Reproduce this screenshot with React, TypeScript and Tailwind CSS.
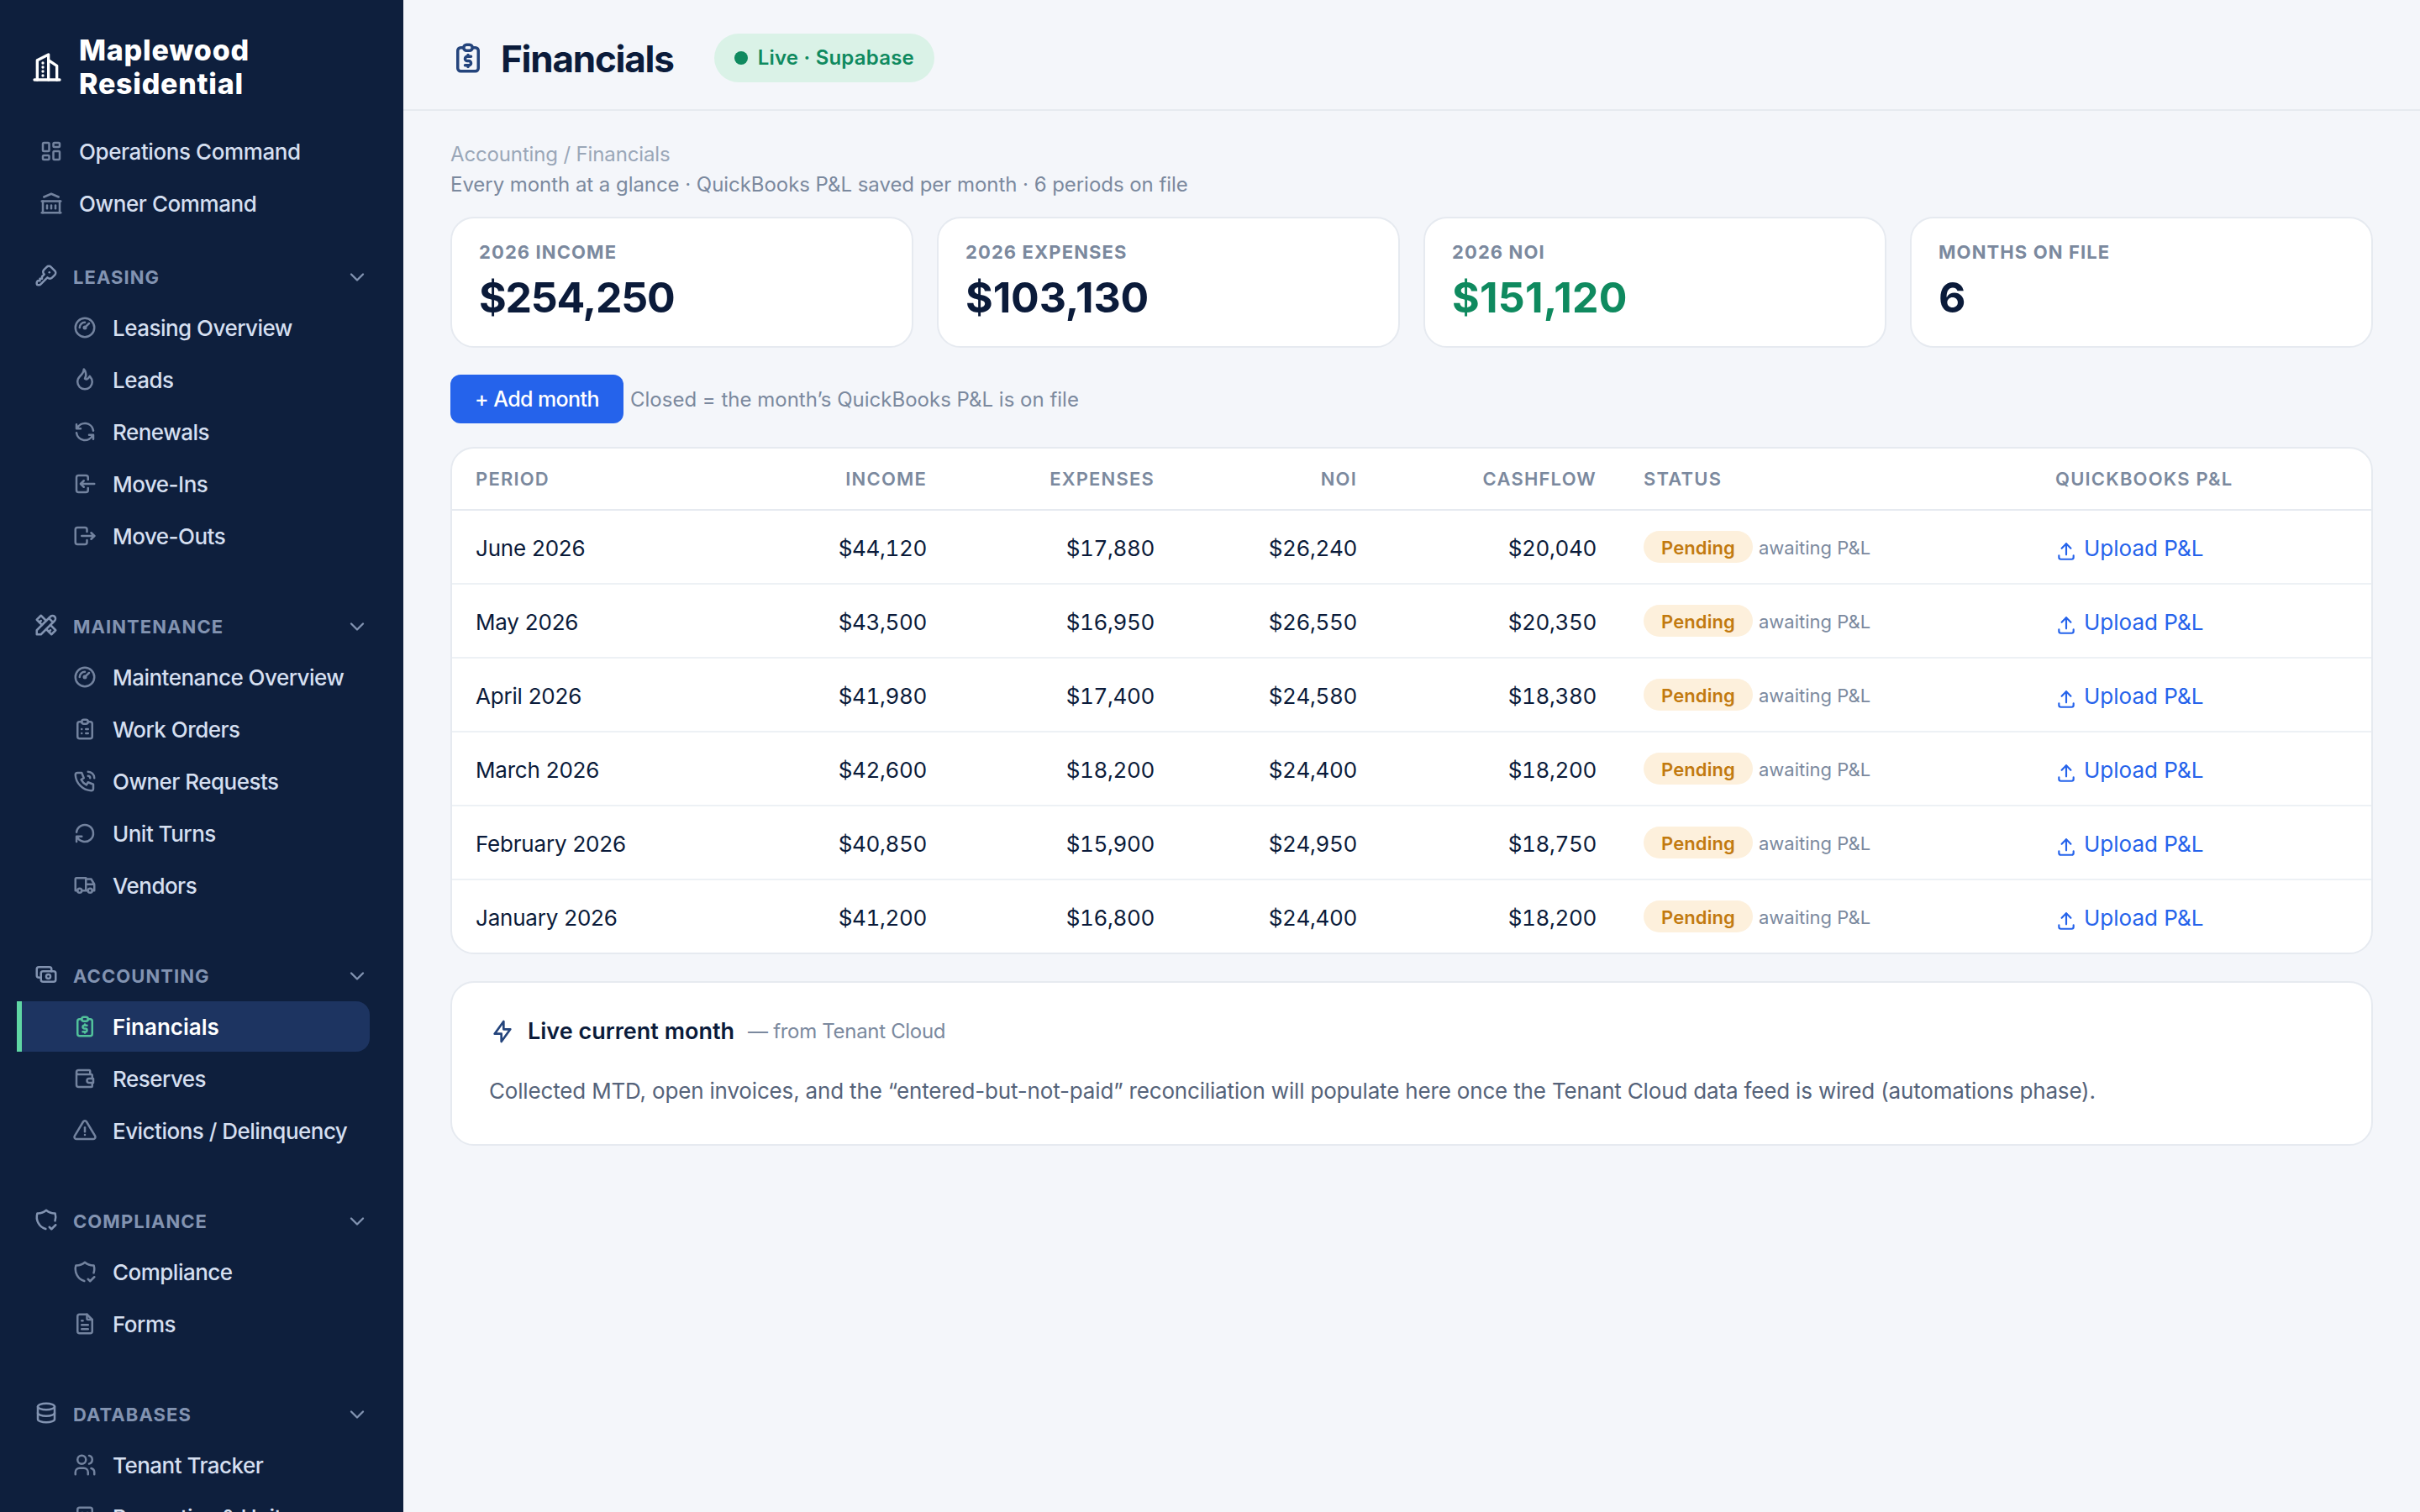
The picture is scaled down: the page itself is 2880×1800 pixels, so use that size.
import type { ComponentType } from "react";
import {
  TbAlertTriangle,
  TbBolt,
  TbBuilding,
  TbBuildingBank,
  TbBuildingSkyscraper,
  TbChevronDown,
  TbClipboardList,
  TbDatabase,
  TbFileText,
  TbFlame,
  TbGauge,
  TbKey,
  TbLayoutDashboard,
  TbLogin,
  TbLogout,
  TbPhoneCall,
  TbRefresh,
  TbReportMoney,
  TbRotateClockwise,
  TbShieldCheck,
  TbTools,
  TbTruck,
  TbUpload,
  TbUsers,
  TbWallet,
} from "react-icons/tb";

type Icon = ComponentType<{ className?: string }>;
type NavItem = { label: string; icon: Icon; active?: boolean };
type NavGroup = { label: string; icon: Icon; items: NavItem[] };

// Rounder banknotes than TbCash
function CashIcon({ className }: { className?: string }) {
  return (
    <svg
      viewBox="0 0 24 24"
      fill="none"
      stroke="currentColor"
      strokeWidth="2"
      strokeLinecap="round"
      strokeLinejoin="round"
      className={className}
    >
      <rect x="7" y="9" width="14" height="10" rx="2" />
      <circle cx="14" cy="14" r="2" />
      <path d="M17 9v-2a2 2 0 0 0 -2 -2h-10a2 2 0 0 0 -2 2v6a2 2 0 0 0 2 2h2" />
    </svg>
  );
}

const topItems: NavItem[] = [
  { label: "Operations Command", icon: TbLayoutDashboard },
  { label: "Owner Command", icon: TbBuildingBank },
];

const groups: NavGroup[] = [
  {
    label: "Leasing",
    icon: TbKey,
    items: [
      { label: "Leasing Overview", icon: TbGauge },
      { label: "Leads", icon: TbFlame },
      { label: "Renewals", icon: TbRefresh },
      { label: "Move-Ins", icon: TbLogin },
      { label: "Move-Outs", icon: TbLogout },
    ],
  },
  {
    label: "Maintenance",
    icon: TbTools,
    items: [
      { label: "Maintenance Overview", icon: TbGauge },
      { label: "Work Orders", icon: TbClipboardList },
      { label: "Owner Requests", icon: TbPhoneCall },
      { label: "Unit Turns", icon: TbRotateClockwise },
      { label: "Vendors", icon: TbTruck },
    ],
  },
  {
    label: "Accounting",
    icon: CashIcon,
    items: [
      { label: "Financials", icon: TbReportMoney, active: true },
      { label: "Reserves", icon: TbWallet },
      { label: "Evictions / Delinquency", icon: TbAlertTriangle },
    ],
  },
  {
    label: "Compliance",
    icon: TbShieldCheck,
    items: [
      { label: "Compliance", icon: TbShieldCheck },
      { label: "Forms", icon: TbFileText },
    ],
  },
  {
    label: "Databases",
    icon: TbDatabase,
    items: [
      { label: "Tenant Tracker", icon: TbUsers },
      { label: "Properties & Units", icon: TbBuilding },
    ],
  },
];

const stats = [
  { label: "2026 Income", value: "$254,250", className: "text-[#0b1b3a] tracking-[-0.024em]" },
  { label: "2026 Expenses", value: "$103,130", className: "text-[#0b1b3a] tracking-[-0.002em]" },
  { label: "2026 NOI", value: "$151,120", className: "text-[#0f8a5f] tracking-[0.005em]" },
  { label: "Months on file", value: "6", className: "text-[#0b1b3a]" },
];

const periods = [
  { period: "June 2026", income: "$44,120", expenses: "$17,880", noi: "$26,240", cashflow: "$20,040" },
  { period: "May 2026", income: "$43,500", expenses: "$16,950", noi: "$26,550", cashflow: "$20,350" },
  { period: "April 2026", income: "$41,980", expenses: "$17,400", noi: "$24,580", cashflow: "$18,380" },
  { period: "March 2026", income: "$42,600", expenses: "$18,200", noi: "$24,400", cashflow: "$18,200" },
  { period: "February 2026", income: "$40,850", expenses: "$15,900", noi: "$24,950", cashflow: "$18,750" },
  { period: "January 2026", income: "$41,200", expenses: "$16,800", noi: "$24,400", cashflow: "$18,200" },
];

function NavLink({ item, nested }: { item: NavItem; nested?: boolean }) {
  const Icon = item.icon;
  return (
    <a
      className={`mb-0.5 flex h-[60px] items-center gap-[18px] rounded-r-2xl border-l-[6px] text-[26px] whitespace-nowrap ${
        nested ? "pl-[60px]" : "pl-5"
      } ${
        item.active
          ? "border-[#5fd6a4] bg-[#1d3461] font-semibold text-white"
          : `border-transparent font-medium text-[#d5dff0] ${
              nested ? "tracking-[-0.02em]" : "tracking-[-0.016em]"
            }`
      }`}
    >
      <Icon
        className={`size-[30px] shrink-0 ${item.active ? "text-[#52c29b]" : "text-[#73839f]"}`}
      />
      {item.label}
    </a>
  );
}

function Sidebar() {
  return (
    <aside className="h-full w-[480px] shrink-0 overflow-hidden bg-[#0e1f3d] px-5 pt-10">
      <div className="mb-[30px] flex items-center gap-[18px] pl-4 text-white">
        <TbBuildingSkyscraper className="size-10 shrink-0" />
        <div className="text-[34px] leading-10 font-extrabold tracking-[0.022em]">
          Maplewood
          <br />
          Residential
        </div>
      </div>

      <nav className="pr-5">
        {topItems.map((item) => (
          <NavLink key={item.label} item={item} />
        ))}

        {groups.map((group) => (
          <div key={group.label} className="mb-[50px] first-of-type:mt-[30px]">
            <div className="mb-0.5 flex h-14 items-center pr-px pl-5 text-[#8293b1]">
              <group.icon className="mb-1 size-[30px]" />
              <span className="ml-[17px] text-[22px] font-bold tracking-[0.048em] uppercase">
                {group.label}
              </span>
              <TbChevronDown className="ml-auto size-7" />
            </div>
            {group.items.map((item) => (
              <NavLink key={item.label} item={item} nested />
            ))}
          </div>
        ))}
      </nav>
    </aside>
  );
}

function StatCard({ label, value, className }: { label: string; value: string; className: string }) {
  return (
    <div className="h-[156px] rounded-[28px] border-2 border-[#e6eaf0] bg-white px-8 pt-[26px]">
      <div className="text-[22px] leading-7 font-bold tracking-[0.05em] text-[#7b899e] uppercase">
        {label}
      </div>
      <div className={`mt-2.5 text-[50px] leading-[60px] font-bold ${className}`}>{value}</div>
    </div>
  );
}

function PeriodTable() {
  const amount = "px-7 pt-0.5 text-right tracking-[-0.015em] tabular-nums";
  return (
    <div className="overflow-hidden rounded-[28px] border-2 border-[#e6eaf0] bg-white">
      <table className="w-full table-fixed border-separate border-spacing-0 text-[26px] text-[#0b1b3a]">
        <colgroup>
          <col className="w-[320px]" />
          <col className="w-[273px]" />
          <col className="w-[271px]" />
          <col className="w-[241px]" />
          <col className="w-[285px]" />
          <col className="w-[490px]" />
          <col />
        </colgroup>
        <thead>
          <tr className="h-[74px] text-[22px] tracking-[0.054em] text-[#7b899e] uppercase *:border-b-2 *:border-[#e6eaf0] *:px-7 *:font-semibold">
            <th className="text-left">Period</th>
            <th className="text-right">Income</th>
            <th className="text-right">Expenses</th>
            <th className="text-right">NOI</th>
            <th className="text-right">Cashflow</th>
            <th className="text-left">Status</th>
            <th className="text-left">QuickBooks P&amp;L</th>
          </tr>
        </thead>
        <tbody>
          {periods.map((row) => (
            <tr
              key={row.period}
              className="h-[88px] *:border-b-2 *:border-[#edf1f5] last:h-[86px] last:*:border-b-0"
            >
              <td className="px-7 pt-0.5 tracking-[-0.008em]">{row.period}</td>
              <td className={amount}>{row.income}</td>
              <td className={amount}>{row.expenses}</td>
              <td className={amount}>{row.noi}</td>
              <td className={amount}>{row.cashflow}</td>
              <td className="px-7">
                <div className="flex items-center gap-[7px] text-[22px]">
                  <span className="flex h-[38px] items-center rounded-full bg-[#fdf0dc] px-[21px] pt-0.5 font-semibold tracking-[0.005em] text-[#c27a10]">
                    Pending
                  </span>
                  <span className="pt-0.5 text-[#7b899e]">awaiting P&amp;L</span>
                </div>
              </td>
              <td className="px-7 pt-0.5">
                <a className="flex items-center gap-2 text-[#2563eb]">
                  <TbUpload className="mt-2 size-[26px]" />
                  Upload P&amp;L
                </a>
              </td>
            </tr>
          ))}
        </tbody>
      </table>
    </div>
  );
}

export default function App() {
  return (
    <div className="flex h-[1800px] w-[2880px] overflow-hidden bg-[#f4f6fa] font-['Inter',sans-serif]">
      <Sidebar />

      <main className="flex-1">
        <header className="flex h-[132px] items-center border-b-2 border-[#e6eaf0] pt-2 pl-14">
          <TbReportMoney className="size-[42px] text-[#24447c]" />
          <h1 className="ml-[18px] pt-0.5 text-[44px] leading-none font-bold tracking-[-0.028em] text-[#0b1b3a]">
            Financials
          </h1>
          <span className="ml-12 flex h-[58px] items-center gap-3 rounded-full bg-[#daf2e7] px-6 text-[24px] font-semibold tracking-[0.009em] text-[#0f8a5f]">
            <span className="size-4 rounded-full bg-current" />
            Live · Supabase
          </span>
        </header>

        <div className="px-14 pt-[34px]">
          <div className="text-[24px] leading-9 tracking-[-0.006em] text-[#9aa7b8]">
            Accounting / Financials
          </div>
          <p className="text-[24px] leading-9 tracking-[-0.002em] text-[#7b899e]">
            Every month at a glance · QuickBooks P&amp;L saved per month · 6 periods on file
          </p>

          <div className="mt-5 grid grid-cols-4 gap-7">
            {stats.map((stat) => (
              <StatCard key={stat.label} {...stat} />
            ))}
          </div>

          <div className="mt-8 mb-7 flex items-center gap-2">
            <button className="h-[58px] w-[206px] rounded-xl bg-[#2563eb] pt-0.5 text-[25px] font-medium tracking-[-0.024em] text-white">
              + Add month
            </button>
            <span className="pt-0.5 text-[24px] text-[#7b899e]">
              Closed = the month’s QuickBooks P&amp;L is on file
            </span>
          </div>

          <PeriodTable />

          <section className="mt-8 h-[196px] rounded-[28px] border-2 border-[#e6eaf0] bg-white px-11 pt-10">
            <h2 className="flex items-center text-[27px] leading-9 font-semibold text-[#0b1b3a]">
              <TbBolt className="size-8 text-[#24447c]" />
              <span className="ml-3.5">Live current month</span>
              <span className="ml-4 text-[24px] font-normal tracking-[-0.013em] text-[#7b899e]">
                — from Tenant Cloud
              </span>
            </h2>
            <p className="mt-[33px] text-[26px] leading-10 tracking-[-0.0065em] text-[#55637a]">
              Collected MTD, open invoices, and the “entered-but-not-paid” reconciliation will
              populate here once the Tenant Cloud data feed is wired (automations phase).
            </p>
          </section>
        </div>
      </main>
    </div>
  );
}
